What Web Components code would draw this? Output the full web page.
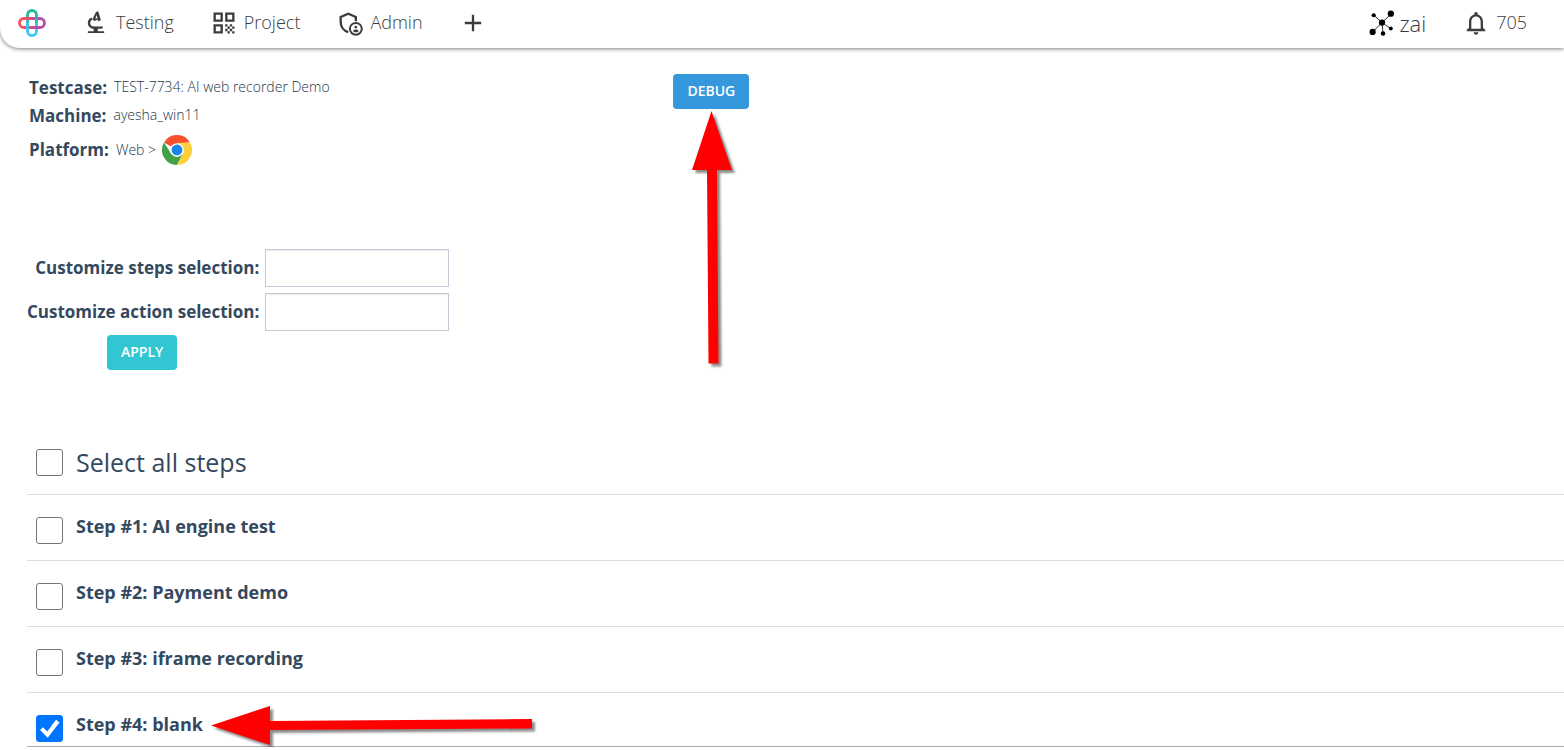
<!DOCTYPE html>
<html lang="en">
<head>
<meta charset="utf-8">
<meta name="viewport" content="width=device-width, initial-scale=1">
<title>Debug testcase</title>
<style>
  body {
    margin: 0;
    background: #fff;
    color: #34495e;
    font-family: "Open Sans", "Noto Sans", sans-serif;
    font-size: 14px;
  }
</style>
</head>
<body>
<debug-page></debug-page>

<script>
// shared helper: opens the shadow root and fills it
class BaseElement extends HTMLElement {
  constructor() {
    super();
    const shadow = this.attachShadow({ mode: "open" });
    const template = document.createElement("template");
    template.innerHTML = this.render();
    shadow.appendChild(template.content.cloneNode(true));
  }
}

const ICONS = {
  testing: `<path d="M5 20.600V19h5v-2C7.200 16.800 5 14.600 5 11.900c0-2.100 1.300-3.900 3.200-4.600l.6 1.900C7.700 9.700 7 10.700 7 11.900c0 1.700 1.300 3.100 3 3.100h8c0 1.100-.9 2-2 2h-2.500v2H19v1.600z"/>
    <path fill-rule="evenodd" d="M8.800 9L12 2.600l1.900-.6 2.300 7.500-2 1.100-1.300-1.300-2.200.9zM12.600 5.200l-1.200 2.900 1.300-.2.800 1z"/>`,
  project: `<path fill-rule="evenodd" d="M3 11h8V3H3zm2-6h4v4H5zM3 21h8v-8H3zm2-6h4v4H5zM13 3v8h8V3zm6 6h-4V5h4z"/>
    <path d="M19 19h2v2h-2zM13 13h2v2h-2zM15 15h2v2h-2zM13 17h2v2h-2zM15 19h2v2h-2zM17 17h2v2h-2zM17 13h2v2h-2zM19 15h2v2h-2z"/>`,
  admin: `<path fill="none" stroke="currentColor" stroke-width="2" d="M17 10.500V6.900l-6.500-2.800L4 6.900v4.300c0 4 2.700 7.500 6.500 8.700"/>
    <circle cx="17" cy="17" r="5.100" fill="none" stroke="currentColor" stroke-width="1.700"/>
    <circle cx="17" cy="15.500" r="1.200"/>
    <path d="M14.400 18.900c.4-.9 1.500-1.400 2.600-1.400s2.200.5 2.600 1.400c-.6.7-1.500 1.100-2.600 1.100s-2-.4-2.600-1.100z"/>`,
  plus: `<path d="M19 13h-6v6h-2v-6H5v-2h6V5h2v6h6z"/>`,
  bell: `<path fill-rule="evenodd" d="M12 22c1.100 0 2-.9 2-2h-4c0 1.100.9 2 2 2zm6-6v-5c0-3.070-1.630-5.640-4.500-6.320V4c0-.83-.67-1.500-1.500-1.500s-1.500.67-1.500 1.500v.68C7.640 5.360 6 7.920 6 11v5l-2 2v1h16v-1zm-2 1H8v-6c0-2.480 1.510-4.500 4-4.500s4 2.020 4 4.500z"/>`,
  nodes: `<path stroke="#000" stroke-width=".8" d="M12.500 13L4.500 6M12.500 13l9-8.500M12.500 13l-9 9M12.500 13l1 10.500M12.500 13l8.500 6"/>
    <g fill="#000"><circle cx="12.500" cy="13" r="3"/><circle cx="4.500" cy="6" r="2"/><circle cx="21" cy="4.500" r="3"/>
    <circle cx="3.500" cy="22" r="3"/><circle cx="13.500" cy="23.500" r="2.200"/><circle cx="21" cy="18.800" r="1.900"/></g>`
};

class NavIcon extends BaseElement {
  render() {
    return `
      <style>
        :host { display: block; flex: none; width: 28px; height: 28px; }
        :host([name="nodes"]) { width: 26px; height: 26px; }
        svg { display: block; width: 100%; height: 100%; overflow: visible; fill: currentColor; }
      </style>
      <svg viewBox="${this.getAttribute("name") === "nodes" ? "0 0 25 25" : "0 0 24 24"}" aria-hidden="true">${ICONS[this.getAttribute("name")] || ""}</svg>`;
  }
}

class AppLogo extends BaseElement {
  render() {
    return `
      <style>
        :host { display: block; flex: none; width: 28px; height: 28px; }
        svg { display: block; }
      </style>
      <svg width="28" height="28" viewBox="0 0 28 28" fill="none" stroke-width="2.800" role="img" aria-label="Home">
        <defs>
          <linearGradient id="h" gradientUnits="userSpaceOnUse" x1="1" y1="0" x2="27" y2="0">
            <stop offset="0" stop-color="#ff4d5e"/><stop offset=".35" stop-color="#ee5269"/>
            <stop offset=".6" stop-color="#b84ba5"/><stop offset="1" stop-color="#b54dac"/>
          </linearGradient>
          <linearGradient id="v" gradientUnits="userSpaceOnUse" x1="0" y1="1" x2="0" y2="27">
            <stop offset="0" stop-color="#1fbd92"/><stop offset=".4" stop-color="#27b8a5"/>
            <stop offset=".6" stop-color="#3cc3ee"/><stop offset="1" stop-color="#3fc4f7"/>
          </linearGradient>
        </defs>
        <rect x="9.500" y="1.500" width="9" height="25" rx="4.500" stroke="url(#v)"/>
        <rect x="1.500" y="9.500" width="25" height="9" rx="4.500" stroke="url(#h)"/>
        <path d="M9.500 15v6M18.500 7v6" stroke="url(#v)"/>
      </svg>`;
  }
}

class NavItem extends BaseElement {
  render() {
    return `
      <style>
        :host { display: block; }
        a {
          display: flex;
          align-items: flex-start;
          gap: 6px;
          color: inherit;
          font-size: 18px;
          line-height: 26px;
          font-weight: 300;
          text-decoration: none;
        }
        :host([large]) a { font-size: 22px; line-height: 28px; gap: 4px; }
      </style>
      <a href="#" aria-label="${this.getAttribute("label") || ""}">
        <nav-icon name="${this.getAttribute("icon")}"></nav-icon><slot></slot>
      </a>`;
  }
}

class AppHeader extends BaseElement {
  render() {
    return `
      <style>
        :host {
          display: flex;
          justify-content: space-between;
          align-items: center;
          box-sizing: border-box;
          height: 48px;
          padding: 0 37px 2px 18px;
          border-bottom-left-radius: 20px;
          background: #fff;
          color: #3c3c3c;
          box-shadow: 0 1px 4px rgba(0, 0, 0, .5);
        }
        nav, .user { display: flex; align-items: center; gap: 36px; }
      </style>
      <nav>
        <app-logo></app-logo>
        <nav-item icon="testing" label="Testing">Testing</nav-item>
        <nav-item icon="project" label="Project">Project</nav-item>
        <nav-item icon="admin" label="Admin">Admin</nav-item>
        <nav-item icon="plus" label="New"></nav-item>
      </nav>
      <div class="user">
        <nav-item icon="nodes" label="zai" large>zai</nav-item>
        <nav-item icon="bell" label="705 notifications">705</nav-item>
      </div>`;
  }
}

class ChromeLogo extends BaseElement {
  render() {
    return `
      <style>
        :host { display: block; width: 30px; height: 30px; }
        svg { display: block; }
      </style>
      <svg width="30" height="30" viewBox="0 0 48 48" role="img" aria-label="Chrome">
        <path fill="#f4512c" d="M24 24L3.200 12A24 24 0 0 1 44.800 12L24 13z"/>
        <path fill="#43a047" d="M3.200 12A24 24 0 0 0 24 48L33.500 29.500 24 35 14.500 29.500z"/>
        <path fill="#fdd03b" d="M44.800 12A24 24 0 0 1 24 48L33.500 29.500 24 12.900z"/>
        <circle cx="24" cy="24" r="11" fill="#fff"/>
        <circle cx="24" cy="24" r="8.700" fill="#1a85e8"/>
      </svg>`;
  }
}

class InfoRow extends BaseElement {
  render() {
    return `
      <style>
        :host { display: flex; align-items: center; gap: 7px; min-height: 28px; }
        :host([tall]) { min-height: 40px; }
        b { font-size: 17px; line-height: 24px; font-weight: 700; }
        .value {
          display: flex;
          align-items: center;
          gap: 6px;
          color: #22364a;
          line-height: 18px;
          font-weight: 300;
        }
        :host(:not([tall])) .value { padding-bottom: 2px; }
      </style>
      <b>${this.getAttribute("label")}:</b>
      <span class="value"><slot></slot></span>`;
  }
}

class ActionButton extends BaseElement {
  render() {
    return `
      <style>
        :host { display: inline-block; }
        button {
          display: block;
          height: 35px;
          padding: 0 14px 2px;
          border: 0;
          border-radius: 4px;
          background: var(--button-color, #3598dc);
          color: #fff;
          font: 600 14px/20px "Open Sans", "Noto Sans", sans-serif;
          cursor: pointer;
        }
      </style>
      <button type="button"><slot></slot></button>`;
  }
}

// red pointer laid over the page, next to whatever it points at
class PointerArrow extends BaseElement {
  render() {
    const up = this.getAttribute("direction") === "up";
    return `
      <style>
        :host { position: absolute; z-index: 1; pointer-events: none; }
        svg { display: block; overflow: visible; fill: #f00; filter: drop-shadow(3px 3px 1px rgba(0, 0, 0, .45)); }
      </style>
      ${up
        ? `<svg width="40" height="253" viewBox="0 0 40 253"><path d="M19.500 0L40 59H25l1.500 193.500h-10L15 59H0z"/></svg>`
        : `<svg width="321" height="39" viewBox="0 0 321 39"><path d="M0 19.500L59 0v15l262-2v9.500L59 24v15z"/></svg>`}`;
  }
}

class SelectionForm extends BaseElement {
  render() {
    return `
      <style>
        :host { display: block; }
        form {
          display: grid;
          grid-template-columns: max-content 184px;
          align-items: center;
          gap: 6px;
        }
        label { font-size: 17px; line-height: 24px; font-weight: 700; text-align: right; }
        input {
          box-sizing: border-box;
          width: 100%;
          height: 38px;
          padding: 6px 12px;
          border: 1px solid #c2cad8;
          box-shadow: inset 0 1px 1px rgba(0, 0, 0, .08);
          color: inherit;
          font: inherit;
        }
        action-button { --button-color: #32c5d2; margin: 4px 0 0 80px; }
      </style>
      <form>
        <label for="steps">Customize steps selection:</label>
        <input id="steps" type="text">
        <label for="actions">Customize action selection:</label>
        <input id="actions" type="text">
      </form>
      <action-button>APPLY</action-button>`;
  }
}

class StepRow extends BaseElement {
  render() {
    return `
      <style>
        :host {
          display: flex;
          align-items: flex-start;
          gap: 13px;
          box-sizing: border-box;
          min-height: 66px;
          padding: 19px 9px 10px;
          border-bottom: 1px solid #ddd;
        }
        :host([heading]) { align-items: center; min-height: 0; padding: 13px 9px 15px; }
        :host([current]) { min-height: 54px; padding-bottom: 4px; border-color: #aaa; }
        label { font-size: 18px; line-height: 24px; font-weight: 700; }
        :host([heading]) label { font-size: 25px; line-height: 34px; font-weight: 400; }
        .text { position: relative; }
        input {
          appearance: none;
          flex: none;
          box-sizing: border-box;
          width: 27px;
          height: 27px;
          margin: 3px 0 0;
          border: 1px solid #767676;
          border-radius: 3px;
          background: #fff;
        }
        :host([heading]) input { margin: 0; }
        input:checked { border-color: #0075ff; background: #0075ff; }
        input:checked::before {
          content: "";
          display: block;
          height: 100%;
          background: #fff;
          clip-path: polygon(12% 56%, 24% 45%, 41% 62%, 76% 15%, 90% 26%, 43% 87%);
        }
      </style>
      <input id="check" type="checkbox" ${this.hasAttribute("checked") ? "checked" : ""}>
      <div class="text">
        <label for="check"><slot></slot></label>
        <slot name="pointer"></slot>
      </div>`;
  }
}

class DebugPage extends BaseElement {
  render() {
    return `
      <style>
        :host { display: block; }
        main { padding: 26px 0 0 27px; }
        .top { display: grid; grid-template-columns: 5fr 7fr; }
        .info { padding-left: 2px; }
        .debug { padding-left: 6px; }
        .anchor { position: relative; display: inline-block; }
        .debug pointer-arrow { top: 37px; left: 19px; }
        selection-form { margin-top: 79px; }
        .steps { margin-top: 62px; }
        step-row pointer-arrow { top: -6px; left: calc(100% + 8px); }
      </style>
      <app-header></app-header>
      <main>
        <div class="top">
          <div class="info">
            <info-row label="Testcase">TEST-7734: AI web recorder Demo</info-row>
            <info-row label="Machine">ayesha_win11</info-row>
            <info-row label="Platform" tall>Web &gt; <chrome-logo></chrome-logo></info-row>
          </div>
          <div class="debug">
            <div class="anchor">
              <action-button>DEBUG</action-button>
              <pointer-arrow direction="up"></pointer-arrow>
            </div>
          </div>
        </div>
        <selection-form></selection-form>
        <div class="steps">
          <step-row heading>Select all steps</step-row>
          <step-row>Step #1: AI engine test</step-row>
          <step-row>Step #2: Payment demo</step-row>
          <step-row>Step #3: iframe recording</step-row>
          <step-row checked current>Step #4: blank<pointer-arrow slot="pointer" direction="left"></pointer-arrow></step-row>
        </div>
      </main>`;
  }
}

window.customElements.define("nav-icon", NavIcon);
window.customElements.define("app-logo", AppLogo);
window.customElements.define("nav-item", NavItem);
window.customElements.define("app-header", AppHeader);
window.customElements.define("chrome-logo", ChromeLogo);
window.customElements.define("info-row", InfoRow);
window.customElements.define("action-button", ActionButton);
window.customElements.define("pointer-arrow", PointerArrow);
window.customElements.define("selection-form", SelectionForm);
window.customElements.define("step-row", StepRow);
window.customElements.define("debug-page", DebugPage);
</script>
</body>
</html>
